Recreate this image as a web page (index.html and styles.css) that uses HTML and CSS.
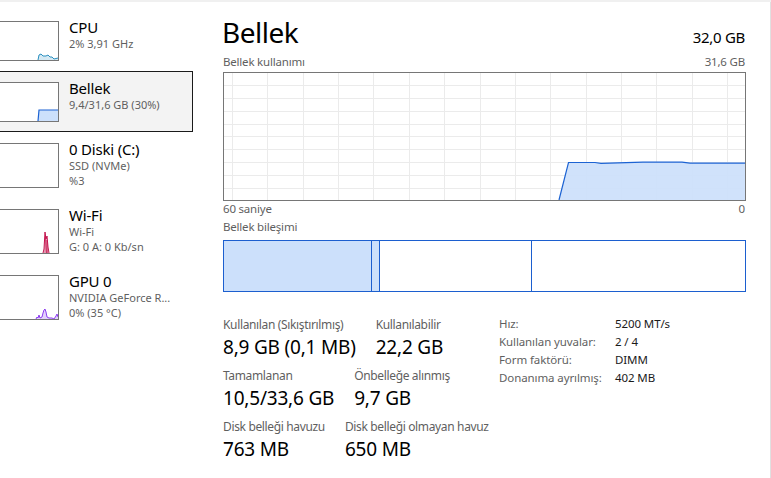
FILE: index.html
```html
<!DOCTYPE html>
<html lang="tr">
<head>
    <meta charset="UTF-8">
    <meta name="viewport" content="width=device-width, initial-scale=1.0">
    <title>Görev Yöneticisi - Performans</title>
    <link rel="stylesheet" href="styles.css">
</head>
<body>
    <div class="topbar"></div>

    <div class="app">
        <!-- sol liste: kaynaklar -->
        <aside class="perf-list">
            <div class="perf-item">
                <div class="thumb">
                    <svg width="68" height="38" viewBox="0 0 68 38">
                        <polygon class="cpu-fill" points="48,38 49,33 51,32 53,34 56,34 58,33 60,35 62,35 64,37 68,36 68,38"/>
                        <polyline class="cpu-line" points="48,38 49,33 51,32 53,34 56,34 58,33 60,35 62,35 64,37 68,36"/>
                    </svg>
                </div>
                <div class="perf-text">
                    <div class="perf-name">CPU</div>
                    <div class="perf-sub">2% 3,91 GHz</div>
                </div>
            </div>

            <div class="perf-item selected">
                <div class="thumb">
                    <svg width="68" height="38" viewBox="0 0 68 38">
                        <polygon class="mem-fill" points="48,38 49,27 68,27 68,38"/>
                        <polyline class="mem-line" points="48,38 49,27 68,27"/>
                    </svg>
                </div>
                <div class="perf-text">
                    <div class="perf-name">Bellek</div>
                    <div class="perf-sub">9,4/31,6 GB (30%)</div>
                </div>
            </div>

            <div class="perf-item">
                <div class="thumb tall">
                    <svg width="68" height="43" viewBox="0 0 68 43"></svg>
                </div>
                <div class="perf-text">
                    <div class="perf-name">0 Diski (C:)</div>
                    <div class="perf-sub">SSD (NVMe)</div>
                    <div class="perf-sub">%3</div>
                </div>
            </div>

            <div class="perf-item">
                <div class="thumb tall">
                    <svg width="68" height="43" viewBox="0 0 68 43">
                        <polygon class="net-fill" points="53,43 54,39 55,22 56,29 57,26 58,37 59,43"/>
                        <polyline class="net-line" points="53,43 54,39 55,22 56,29 57,26 58,37 59,43"/>
                        <polyline class="net-line thin" points="55,43 55.5,26 56.5,43 57,30 57.5,43"/>
                    </svg>
                </div>
                <div class="perf-text">
                    <div class="perf-name">Wi-Fi</div>
                    <div class="perf-sub">Wi-Fi</div>
                    <div class="perf-sub">G: 0 A: 0 Kb/sn</div>
                </div>
            </div>

            <div class="perf-item">
                <div class="thumb tall">
                    <svg width="68" height="43" viewBox="0 0 68 43">
                        <polygon class="gpu-fill" points="46,43 47,41 48,42 49,39 50,42 52,41 53,37 54,34 55,33 56,36 57,41 59,42 62,42 64,43 66,40 67,38 68,41 68,43"/>
                        <polyline class="gpu-line" points="46,43 47,41 48,42 49,39 50,42 52,41 53,37 54,34 55,33 56,36 57,41 59,42 62,42 64,43 66,40 67,38 68,41"/>
                    </svg>
                </div>
                <div class="perf-text">
                    <div class="perf-name">GPU 0</div>
                    <div class="perf-sub">NVIDIA GeForce R...</div>
                    <div class="perf-sub">0% (35 °C)</div>
                </div>
            </div>
        </aside>

        <!-- sağ taraf: bellek ayrıntısı -->
        <main class="detail">
            <div class="detail-head">
                <h1>Bellek</h1>
                <span class="total">32,0 GB</span>
            </div>

            <div class="caption">
                <span>Bellek kullanımı</span>
                <span>31,6 GB</span>
            </div>
            <svg class="usage-chart" width="523" height="129" viewBox="0 0 523 129">
                <g class="grid">
                    <line x1="9.5" y1="0" x2="9.5" y2="129"/>
                    <line x1="44.5" y1="0" x2="44.5" y2="129"/>
                    <line x1="80.5" y1="0" x2="80.5" y2="129"/>
                    <line x1="115.5" y1="0" x2="115.5" y2="129"/>
                    <line x1="150.5" y1="0" x2="150.5" y2="129"/>
                    <line x1="186.5" y1="0" x2="186.5" y2="129"/>
                    <line x1="221.5" y1="0" x2="221.5" y2="129"/>
                    <line x1="257.5" y1="0" x2="257.5" y2="129"/>
                    <line x1="292.5" y1="0" x2="292.5" y2="129"/>
                    <line x1="327.5" y1="0" x2="327.5" y2="129"/>
                    <line x1="363.5" y1="0" x2="363.5" y2="129"/>
                    <line x1="398.5" y1="0" x2="398.5" y2="129"/>
                    <line x1="433.5" y1="0" x2="433.5" y2="129"/>
                    <line x1="469.5" y1="0" x2="469.5" y2="129"/>
                    <line x1="504.5" y1="0" x2="504.5" y2="129"/>
                    <line x1="0" y1="13.5" x2="523" y2="13.5"/>
                    <line x1="0" y1="26.5" x2="523" y2="26.5"/>
                    <line x1="0" y1="39.5" x2="523" y2="39.5"/>
                    <line x1="0" y1="52.5" x2="523" y2="52.5"/>
                    <line x1="0" y1="64.5" x2="523" y2="64.5"/>
                    <line x1="0" y1="77.5" x2="523" y2="77.5"/>
                    <line x1="0" y1="90.5" x2="523" y2="90.5"/>
                    <line x1="0" y1="103.5" x2="523" y2="103.5"/>
                    <line x1="0" y1="116.5" x2="523" y2="116.5"/>
                </g>
                <polygon class="mem-fill soft" points="336,128 345.5,90.5 372,90.5 378,91.3 420,90.2 459,90.2 467,91.2 522,91.2 522,128"/>
                <polyline class="mem-line" points="336,128 345.5,90.5 372,90.5 378,91.3 420,90.2 459,90.2 467,91.2 522,91.2"/>
                <rect class="frame" x="0.5" y="0.5" width="522" height="128"/>
            </svg>
            <div class="caption">
                <span>60 saniye</span>
                <span>0</span>
            </div>

            <div class="caption gap">
                <span>Bellek bileşimi</span>
            </div>
            <svg class="composition" width="523" height="52" viewBox="0 0 523 52">
                <rect class="used" x="1" y="1" width="155" height="50"/>
                <line class="split" x1="148.5" y1="0" x2="148.5" y2="52"/>
                <line class="split" x1="156.5" y1="0" x2="156.5" y2="52"/>
                <line class="split" x1="308.5" y1="0" x2="308.5" y2="52"/>
                <rect class="bar-frame" x="0.5" y="0.5" width="522" height="51"/>
            </svg>

            <div class="stats">
                <div class="stats-main">
                    <div class="stat-row">
                        <div class="stat">
                            <div class="stat-label">Kullanılan (Sıkıştırılmış)</div>
                            <div class="stat-value">8,9 GB (0,1 MB)</div>
                        </div>
                        <div class="stat">
                            <div class="stat-label">Kullanılabilir</div>
                            <div class="stat-value">22,2 GB</div>
                        </div>
                    </div>
                    <div class="stat-row">
                        <div class="stat">
                            <div class="stat-label">Tamamlanan</div>
                            <div class="stat-value">10,5/33,6 GB</div>
                        </div>
                        <div class="stat">
                            <div class="stat-label">Önbelleğe alınmış</div>
                            <div class="stat-value">9,7 GB</div>
                        </div>
                    </div>
                    <div class="stat-row">
                        <div class="stat">
                            <div class="stat-label">Disk belleği havuzu</div>
                            <div class="stat-value">763 MB</div>
                        </div>
                        <div class="stat">
                            <div class="stat-label">Disk belleği olmayan havuz</div>
                            <div class="stat-value">650 MB</div>
                        </div>
                    </div>
                </div>

                <div class="specs">
                    <span class="spec-key">Hız:</span><span class="spec-val">5200 MT/s</span>
                    <span class="spec-key">Kullanılan yuvalar:</span><span class="spec-val">2 / 4</span>
                    <span class="spec-key">Form faktörü:</span><span class="spec-val">DIMM</span>
                    <span class="spec-key">Donanıma ayrılmış:</span><span class="spec-val">402 MB</span>
                </div>
            </div>
        </main>

        <div class="edge"></div>
    </div>
</body>
</html>
```

FILE: styles.css
```css
* {
    margin: 0;
    padding: 0;
    box-sizing: border-box;
}
body {
    background: #fff;
    font-family: "Segoe UI", "Noto Sans", sans-serif;
    color: #000;
    width: 771px;
    height: 478px;
    overflow: hidden;
}
.topbar {
    height: 2px;
    background: #f0f0f0;
}
.app {
    display: flex;
    height: 476px;
}

/* sol liste */
.perf-list {
    width: 205px;
    margin-left: -12px;
    padding-top: 8px;
    flex-shrink: 0;
}
.perf-item {
    display: flex;
    align-items: flex-start;
    gap: 10px;
    padding: 10px 0 9px;
    border: 1px solid transparent;
}
.perf-item.selected {
    background: #f3f3f3;
    border-color: #1a1a1a;
}
.thumb {
    width: 70px;
    height: 40px;
    border: 1px solid #767676;
    background: #fff;
    flex-shrink: 0;
}
.thumb.tall {
    height: 45px;
}
.thumb svg {
    display: block;
}
.perf-text {
    margin-top: -2px;
}
.perf-name {
    font-size: 15px;
    line-height: 17px;
    letter-spacing: -0.2px;
}
.perf-sub {
    font-size: 11px;
    line-height: 15px;
    color: #5f5f5f;
}

.cpu-fill { fill: #d5e9f3; }
.cpu-line { fill: none; stroke: #2a8fbf; stroke-width: 1; }
.mem-fill { fill: #cce0fb; }
.mem-line { fill: none; stroke: #1c63d3; stroke-width: 1.2; }
.net-fill { fill: #f1cdd9; }
.net-line { fill: none; stroke: #c4154f; stroke-width: 1; }
.net-line.thin { stroke-width: 0.6; }
.gpu-fill { fill: #e3d2fb; }
.gpu-line { fill: none; stroke: #8c3cf0; stroke-width: 1; }

/* sağ ayrıntı paneli */
.detail {
    width: 524px;
    margin-left: 29px;
    flex-shrink: 0;
}
.detail-head {
    display: flex;
    justify-content: space-between;
    align-items: baseline;
    margin-top: 12px;
    padding-right: 1px;
}
.detail-head h1 {
    font-size: 28px;
    font-weight: 400;
    line-height: 36px;
    letter-spacing: -0.5px;
}
.total {
    font-size: 15px;
    letter-spacing: -0.3px;
}
.caption {
    display: flex;
    justify-content: space-between;
    font-size: 11.5px;
    line-height: 16px;
    letter-spacing: -0.2px;
    color: #5f5f5f;
    margin-top: 4px;
    padding: 0 1px;
}
.caption + .usage-chart {
    margin-top: 2px;
}
.usage-chart,
.composition {
    display: block;
    margin-left: 1px;
    shape-rendering: crispEdges;
}
.usage-chart + .caption {
    margin-top: 0;
}
.caption.gap {
    margin-top: 2px;
}
.caption.gap + .composition {
    margin-top: 5px;
}
.grid line {
    stroke: #ebebeb;
    stroke-width: 1;
}
.usage-chart .mem-fill,
.usage-chart .mem-line {
    shape-rendering: geometricPrecision;
}
.mem-fill.soft { fill: #cce0fb; fill-opacity: 0.92; }
.frame {
    fill: none;
    stroke: #767676;
}
.used { fill: #cce0fb; }
.split { stroke: #1c5fcf; }
.bar-frame {
    fill: none;
    stroke: #1c5fcf;
}

/* alt istatistikler */
.stats {
    display: flex;
    align-items: flex-start;
    margin-top: 24px;
    padding-left: 1px;
}
.stats-main {
    width: 276px;
}
.stat-row {
    display: flex;
    gap: 20px;
    margin-bottom: 7px;
}
.stat-label {
    font-size: 12px;
    line-height: 17px;
    letter-spacing: -0.35px;
    color: #5f5f5f;
    white-space: nowrap;
}
.stat-value {
    font-size: 19px;
    line-height: 26px;
    letter-spacing: -0.2px;
    margin-top: 1px;
    white-space: nowrap;
}
.specs {
    display: grid;
    grid-template-columns: 116px auto;
    margin-top: -1px;
    font-size: 11.5px;
    line-height: 18px;
    letter-spacing: -0.1px;
}
.spec-key { color: #5f5f5f; }
.spec-val { color: #1a1a1a; }

.edge {
    margin-left: auto;
    width: 1px;
    background: #e0e0e0;
}
```
